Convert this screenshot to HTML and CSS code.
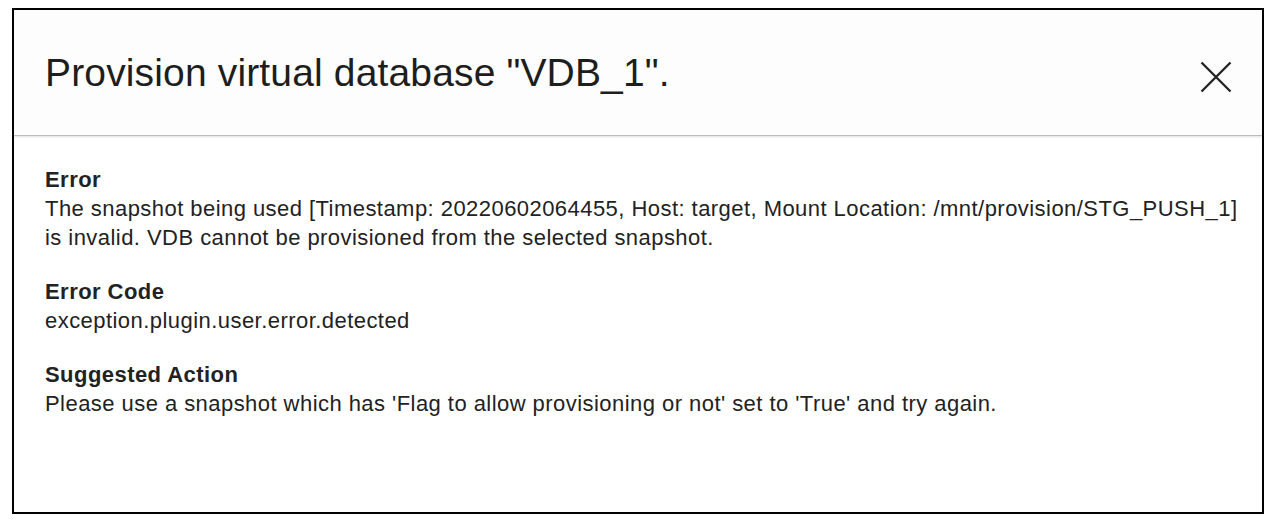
FILE: index.html
```html
<!DOCTYPE html>
<html lang="en">
<head>
<meta charset="utf-8">
<title>Provision virtual database</title>
<link rel="stylesheet" href="styles.css">
</head>
<body>
<div class="dialog">
  <header class="dialog-header">
    <h1 class="dialog-title">Provision virtual database "VDB_1".</h1>
    <button class="close-btn" aria-label="Close">
      <svg viewBox="0 0 32 32" width="32" height="32">
        <path d="M1.5 1.5 L30.5 30.5 M30.5 1.5 L1.5 30.5" stroke="#222" stroke-width="2.3" fill="none"/>
      </svg>
    </button>
  </header>
  <div class="dialog-body">
    <section class="field">
      <div class="field-label">Error</div>
      <div class="field-value">The snapshot being used [Timestamp: 20220602064455, Host: target, Mount Location: /mnt/provision/STG_PUSH_1] is invalid. VDB cannot be provisioned from the selected snapshot.</div>
    </section>
    <section class="field">
      <div class="field-label">Error Code</div>
      <div class="field-value">exception.plugin.user.error.detected</div>
    </section>
    <section class="field">
      <div class="field-label">Suggested Action</div>
      <div class="field-value">Please use a snapshot which has 'Flag to allow provisioning or not' set to 'True' and try again.</div>
    </section>
  </div>
</div>
</body>
</html>
```

FILE: styles.css
```css
html, body {
  background: #fff;
}

body {
  margin: 8px 8px 8px 12px;
  font-family: "Liberation Sans", Arial, sans-serif;
  color: #222;
}

.dialog {
  height: 506px;
  box-sizing: border-box;
  border: 2px solid #000;
  display: flex;
  flex-direction: column;
  background: #fff;
}

.dialog-header {
  height: 125px;
  flex: none;
  display: flex;
  align-items: flex-start;
  justify-content: space-between;
  padding: 0 30px 0 31px;
  background: #fdfdfd;
  border-bottom: 1px solid #bdbdbd;
  box-shadow: 0 1px 2px rgba(0, 0, 0, 0.12);
}

.dialog-title {
  margin: 40px 0 0 0;
  font-size: 39px;
  line-height: 45px;
  font-weight: normal;
  letter-spacing: 0.15px;
  color: #1e1e1e;
}

.close-btn {
  margin-top: 51px;
  border: 0;
  background: none;
  padding: 0;
  width: 32px;
  height: 32px;
  cursor: pointer;
  display: flex;
}

.dialog-body {
  padding: 29px 16px 0 31px;
}

.field + .field {
  margin-top: 25px;
}

.field-label,
.field-value {
  font-size: 22px;
  line-height: 29px;
  letter-spacing: 0.45px;
  color: #222;
}

.field-label {
  font-weight: bold;
}
```
